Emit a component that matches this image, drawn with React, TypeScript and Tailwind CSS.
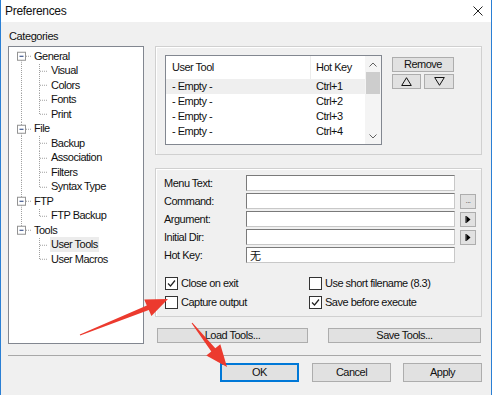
import React from "react";

type Node = { t: string; lvl: 0 | 1; first?: boolean; last?: boolean; lastChild?: boolean; parentLast?: boolean; sel?: boolean };

const tree: Node[] = [
  { t: "General", lvl: 0, first: true },
  { t: "Visual", lvl: 1 },
  { t: "Colors", lvl: 1 },
  { t: "Fonts", lvl: 1 },
  { t: "Print", lvl: 1, lastChild: true },
  { t: "File", lvl: 0 },
  { t: "Backup", lvl: 1 },
  { t: "Association", lvl: 1 },
  { t: "Filters", lvl: 1 },
  { t: "Syntax Type", lvl: 1, lastChild: true },
  { t: "FTP", lvl: 0 },
  { t: "FTP Backup", lvl: 1, lastChild: true },
  { t: "Tools", lvl: 0, last: true },
  { t: "User Tools", lvl: 1, parentLast: true, sel: true },
  { t: "User Macros", lvl: 1, parentLast: true, lastChild: true },
];

const H = 14.5;
const CY = 7.25;
const dot = { stroke: "#a0a0a0", strokeWidth: 1, strokeDasharray: "1 1" };

function TreeLines({ n }: { n: Node }) {
  if (n.lvl === 0) {
    return (
      <svg width={23} height={H} viewBox={`0 0 23 ${H}`} className="shrink-0">
        {!n.first && <line x1={12.5} y1={0} x2={12.5} y2={CY - 4} {...dot} />}
        {!n.last && <line x1={12.5} y1={CY + 4} x2={12.5} y2={H} {...dot} />}
        <line x1={17} y1={CY} x2={22} y2={CY} {...dot} />
        <rect x={8.5} y={CY - 4} width={8} height={8} fill="#fff" stroke="#939393" strokeWidth={1} />
        <line x1={10.5} y1={CY} x2={14.5} y2={CY} stroke="#1e3a7a" strokeWidth={1} />
      </svg>
    );
  }
  return (
    <svg width={40} height={H} viewBox={`0 0 40 ${H}`} className="shrink-0">
      {!n.parentLast && <line x1={12.5} y1={0} x2={12.5} y2={H} {...dot} />}
      <line x1={30.5} y1={0} x2={30.5} y2={n.lastChild ? CY : H} {...dot} />
      <line x1={31} y1={CY} x2={39} y2={CY} {...dot} />
    </svg>
  );
}

function Btn({ className = "", children }: { className?: string; children?: React.ReactNode }) {
  return (
    <div className={`flex items-center justify-center bg-[#e1e1e1] border border-[#adadad] ${className}`}>
      {children}
    </div>
  );
}

function Check({ checked }: { checked?: boolean }) {
  return (
    <div className="w-[13px] h-[13px] border border-[#333333] bg-white flex items-center justify-center shrink-0">
      {checked && (
        <svg width="9" height="9" viewBox="0 0 9 9">
          <path d="M1 4.5 L3.5 7 L8 1.5" fill="none" stroke="#222" strokeWidth="1.2" />
        </svg>
      )}
    </div>
  );
}

function Arrow() {
  return (
    <svg width="8" height="9" viewBox="0 0 8 9">
      <rect x="1.5" y="1" width="1" height="7" fill="#000" />
      <path d="M2.5 1 L6.5 4.5 L2.5 8 Z" fill="#000" />
    </svg>
  );
}

export default function App() {
  const fields = ["Menu Text:", "Command:", "Argument:", "Initial Dir:", "Hot Key:"];
  return (
    <div className="relative w-[492px] h-[395px] overflow-hidden bg-[#f0f0f0] border-x border-[#2a7fd4] font-['Liberation_Sans',Arial,sans-serif] text-[11px] tracking-[-0.5px] text-[#111] leading-none">
      {/* title bar */}
      <div className="h-[22px] bg-white flex items-center justify-between pl-[4px] pr-[8px]">
        <span className="text-[12px] tracking-[-0.3px]">Preferences</span>
        <svg width="10" height="10" viewBox="0 0 10 10">
          <path d="M0.5 0.5 L9.5 9.5 M9.5 0.5 L0.5 9.5" stroke="#222" strokeWidth="1" />
        </svg>
      </div>

      {/* main */}
      <div className="flex">
        {/* left column */}
        <div className="ml-[7px] w-[136px] flex flex-col">
          <div className="h-[24px] pt-[4px] flex items-center pl-[1px] tracking-[-0.4px]">Categories</div>
          <div className="h-[298px] bg-white border border-[#828790] pt-[2px]">
            {tree.map((n) => (
              <div key={n.t} className="h-[14.5px] flex items-center">
                <TreeLines n={n} />
                <span className={`ml-[1px] px-[1px] py-[2px] ${n.sel ? "bg-[#ececec]" : ""}`}>{n.t}</span>
              </div>
            ))}
          </div>
        </div>

        {/* right column */}
        <div className="ml-[11px] w-[327px] pt-[24px] flex flex-col">
          {/* frame 1 */}
          <div className="h-[109px] border border-[#d0d0d0] shadow-[inset_1px_1px_0_#ffffff] flex pl-[9px] pt-[8px]">
            <div className="w-[217px] h-[90px] border border-[#828790] bg-white flex">
              <div className="w-[199px] flex flex-col">
                <div className="h-[23px] flex items-center">
                  <div className="w-[144px] pl-[6px]">User Tool</div>
                  <div className="flex-1 h-full border-l border-[#ececec] pl-[5px] flex items-center">Hot Key</div>
                </div>
                {["Ctrl+1", "Ctrl+2", "Ctrl+3", "Ctrl+4"].map((k, i) => (
                  <div key={k} className={`h-[15px] flex items-center ${i === 0 ? "bg-[#efefef]" : ""}`}>
                    <div className="w-[144px] pl-[6px]">- Empty -</div>
                    <div className="pl-[6px]">{k}</div>
                  </div>
                ))}
              </div>
              <div className="w-[16px] bg-[#f4f4f4] flex flex-col">
                <div className="h-[16px] flex items-center justify-center">
                  <svg width="8" height="5" viewBox="0 0 8 5"><path d="M0.5 4.5 L4 1 L7.5 4.5" fill="none" stroke="#606060" strokeWidth="1" /></svg>
                </div>
                <div className="h-[22px] mx-[1px] bg-[#cdcdcd]" />
                <div className="flex-1" />
                <div className="h-[16px] flex items-center justify-center">
                  <svg width="8" height="5" viewBox="0 0 8 5"><path d="M0.5 0.5 L4 4 L7.5 0.5" fill="none" stroke="#606060" strokeWidth="1" /></svg>
                </div>
              </div>
            </div>
            <div className="ml-[10px] mt-[2px] flex flex-col">
              <Btn className="w-[62px] h-[15px]">Remove</Btn>
              <div className="mt-[2px] flex gap-[3px]">
                <Btn className="w-[29px] h-[15px]">
                  <svg width="11" height="9" viewBox="0 0 11 9"><path d="M5.5 0.7 L10.3 8.5 L0.7 8.5 Z" fill="none" stroke="#111" strokeWidth="1" /></svg>
                </Btn>
                <Btn className="w-[30px] h-[15px]">
                  <svg width="11" height="9" viewBox="0 0 11 9"><path d="M5.5 8.3 L10.3 0.5 L0.7 0.5 Z" fill="none" stroke="#111" strokeWidth="1" /></svg>
                </Btn>
              </div>
            </div>
          </div>

          {/* frame 2 */}
          <div className="mt-[13px] h-[149px] border border-[#d0d0d0] shadow-[inset_1px_1px_0_#ffffff] pl-[8px] pt-[6px] flex flex-col">
            {fields.map((f, i) => (
              <div key={f} className="h-[16px] mb-[2px] flex items-center">
                <div className="w-[82px]">{f}</div>
                <div className="w-[209px] h-[16px] bg-white border border-[#7a7a7a] border-b-[#c8c8c8] border-r-[#c8c8c8] flex items-center pl-[3px]">
                  {i === 4 && <span className="font-['Noto_Sans_CJK_SC',sans-serif] text-[11px]">无</span>}
                </div>
                {i === 1 && (
                  <Btn className="ml-[5px] w-[16px] h-[15px] items-end pb-[3px] text-[#555] text-[8px]">...</Btn>
                )}
                {(i === 2 || i === 3) && (
                  <Btn className="ml-[5px] w-[16px] h-[15px]"><Arrow /></Btn>
                )}
              </div>
            ))}
            <div className="mt-[12px] flex pl-[1px]">
              <div className="w-[144px] flex flex-col gap-[6px]">
                <div className="flex items-center gap-[3px]"><Check checked /><span>Close on exit</span></div>
                <div className="flex items-center gap-[3px]"><Check /><span>Capture output</span></div>
              </div>
              <div className="flex flex-col gap-[6px]">
                <div className="flex items-center gap-[3px]"><Check /><span>Use short filename (8.3)</span></div>
                <div className="flex items-center gap-[3px]"><Check checked /><span>Save before execute</span></div>
              </div>
            </div>
          </div>

          <div className="mt-[11px] flex">
            <Btn className="ml-[2px] w-[151px] h-[15px]">Load Tools...</Btn>
            <Btn className="ml-[20px] w-[153px] h-[15px]">Save Tools...</Btn>
          </div>
        </div>
      </div>

      {/* separator */}
      <div className="mt-[11px] ml-[7px] w-[473px] border-t border-[#a8a8a8]" />

      {/* bottom buttons */}
      <div className="mt-[7px] flex ml-[219px]">
        <div className="w-[79px] h-[19px] bg-[#e1e1e1] border-2 border-[#0078d7] flex items-center justify-center">OK</div>
        <Btn className="ml-[13px] w-[79px] h-[19px]">Cancel</Btn>
        <Btn className="ml-[12px] w-[79px] h-[19px]">Apply</Btn>
      </div>

      {/* red annotation arrows */}
      <svg className="absolute -left-px top-0 pointer-events-none" width="492" height="395" viewBox="0 0 492 395">
        <polygon
          points="79.8,334.5 146.8,305.4 144.2,299.4 168,299 151.4,315.9 148.8,310 80.2,335.5"
          fill="#ec3a2e"
        />
        <polygon
          points="191.6,323.3 211.3,351.4 206.3,355.4 227,367 220.3,344.2 215.3,348.2 192.4,322.7"
          fill="#ec3a2e"
        />
      </svg>
    </div>
  );
}
